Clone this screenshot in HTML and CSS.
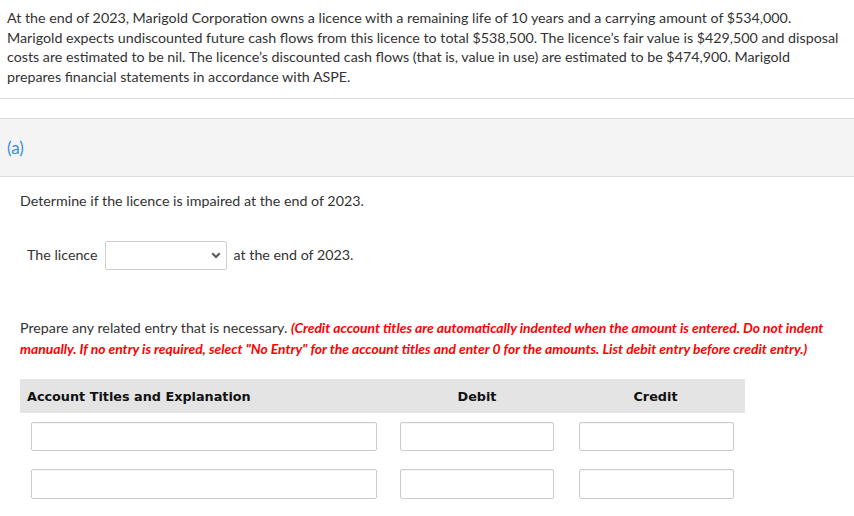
FILE: index.html
```html
<!DOCTYPE html>
<html>
<head>
<meta charset="utf-8">
<link rel="stylesheet" href="styles.css">
</head>
<body>
<div class="intro">At the end of 2023, Marigold Corporation owns a licence with a remaining life of 10 years and a carrying amount of $534,000. Marigold expects undiscounted future cash flows from this licence to total $538,500. The licence’s fair value is $429,500 and disposal costs are estimated to be nil. The licence’s discounted cash flows (that is, value in use) are estimated to be $474,900. Marigold prepares financial statements in accordance with ASPE.</div>
<div class="part-band"><span class="part-label">(a)</span></div>
<div class="part-body">
  <p class="question">Determine if the licence is impaired at the end of 2023.</p>
  <div class="fill-row">
    <span>The licence</span>
    <div class="select-box">
      <svg class="chev" width="10" height="7" viewBox="0 0 10 7"><path d="M1.2 1.2 L5 5 L8.8 1.2" fill="none" stroke="#555" stroke-width="2"/></svg>
    </div>
    <span>at the end of 2023.</span>
  </div>
  <p class="instructions">Prepare any related entry that is necessary. <em class="warn">(Credit account titles are automatically indented when the amount is entered. Do not indent manually. If no entry is required, select "No Entry" for the account titles and enter 0 for the amounts. List debit entry before credit entry.)</em></p>
  <div class="journal">
    <div class="jh jh-title">Account Titles and Explanation</div>
    <div class="jh jh-num">Debit</div>
    <div class="jh jh-num">Credit</div>
    <div class="jc c1"><div class="field"></div></div>
    <div class="jc c2"><div class="field"></div></div>
    <div class="jc c3"><div class="field"></div></div>
    <div class="jc c1 r2"><div class="field"></div></div>
    <div class="jc c2 r2"><div class="field"></div></div>
    <div class="jc c3 r2"><div class="field"></div></div>
  </div>
</div>
</body>
</html>
```

FILE: styles.css
```css
html, body {
  margin: 0;
  padding: 0;
  background: #fff;
}
body {
  font-family: Lato, "Open Sans", sans-serif;
  font-size: 14.25px;
  color: #333;
}
.intro {
  padding: 8px 12px 12px 7px;
  line-height: 19.5px;
  border-bottom: 1px solid #dedede;
}
.part-band {
  margin-top: 19px;
  height: 57px;
  background: #f4f4f4;
  border-top: 1px solid #dcdcdc;
  border-bottom: 1px solid #dcdcdc;
  display: flex;
  align-items: center;
  padding-left: 7px;
}
.part-label {
  color: #3a8fd6;
  font-size: 17px;
}
.part-body {
  padding: 0 20px;
}
.question {
  margin: 14px 0 0 0;
  line-height: 20px;
}
.fill-row {
  margin-top: 30px;
  padding-left: 7px;
  display: flex;
  align-items: center;
  gap: 7px;
}
.fill-row span {
  margin-top: -3px;
}
.select-box {
  width: 115px;
  height: 27px;
  border: 1px solid #cfcfcf;
  border-radius: 2px;
  display: flex;
  align-items: center;
  justify-content: flex-end;
  padding-right: 5px;
}
.chev { display: block; }
.instructions {
  margin: 47px 0 0 0;
  line-height: 21px;
}
.warn {
  color: #f00;
  font-weight: bold;
  font-style: italic;
  font-size: 13.85px;
}
.journal {
  margin-top: 20px;
  width: 725px;
  display: grid;
  grid-template-columns: 368px 178px 179px;
}
.jh {
  background: #e4e4e4;
  height: 34px;
  display: flex;
  align-items: center;
  font-family: "DejaVu Sans", Verdana, sans-serif;
  font-weight: bold;
  font-size: 12.8px;
  color: #111;
}
.jh-title { padding-left: 7px; }
.jh-num { justify-content: center; }
.jc { padding-top: 9px; }
.jc.r2 { padding-top: 18px; }
.c1 { padding-left: 11px; padding-right: 11px; }
.c2 { padding-left: 12px; padding-right: 12px; }
.c3 { padding-left: 13px; padding-right: 11px; }
.field {
  height: 27px;
  border: 1px solid #cbcbcb;
  border-radius: 2px;
  box-shadow: inset 0 1px 1px rgba(0,0,0,0.04);
}
.r2 .field { height: 28px; }
```
